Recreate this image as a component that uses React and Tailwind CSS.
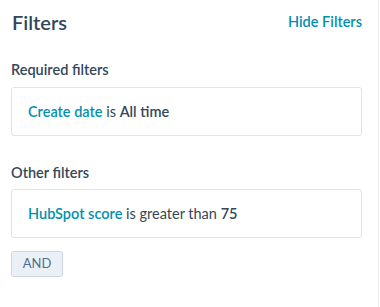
import React from 'react';

const FilterCard = ({ children }) => (
  <div className="h-[49px] border border-[#dfe3eb] rounded-[3px] px-4 flex items-center text-[14.5px] leading-5 text-[#33475b]">
    <p>{children}</p>
  </div>
);

const App = () => {
  return (
    <div className="w-[379px] h-[307px] bg-white border-r border-[#eaf0f6] pl-[11px] pr-4 font-['Lato',_sans-serif] text-[#33475b]">
      <div className="flex items-center justify-between pt-2 h-9">
        <h1 className="text-[20px] leading-7 font-semibold pl-px">Filters</h1>
        <button className="text-[14.5px] leading-5 font-semibold text-[#0091ae]">Hide Filters</button>
      </div>

      <h2 className="mt-6 text-[14.5px] leading-5 font-semibold">Required filters</h2>
      <div className="mt-[7px]">
        <FilterCard>
          <span className="font-semibold text-[#0091ae]">Create date</span> is{' '}
          <span className="font-semibold">All time</span>
        </FilterCard>
      </div>

      <h2 className="mt-[27px] text-[14.5px] leading-5 font-semibold">Other filters</h2>
      <div className="mt-[6px]">
        <FilterCard>
          <span className="font-semibold text-[#0091ae]">HubSpot score</span> is greater than{' '}
          <span className="font-semibold">75</span>
        </FilterCard>
      </div>

      <button className="mt-[13px] h-[26px] w-[52px] bg-[#eaf0f6] border border-[#cbd6e2] rounded-[3px] text-[13px] text-[#516f90] flex items-center justify-center">
        AND
      </button>
    </div>
  );
};

export default App;
